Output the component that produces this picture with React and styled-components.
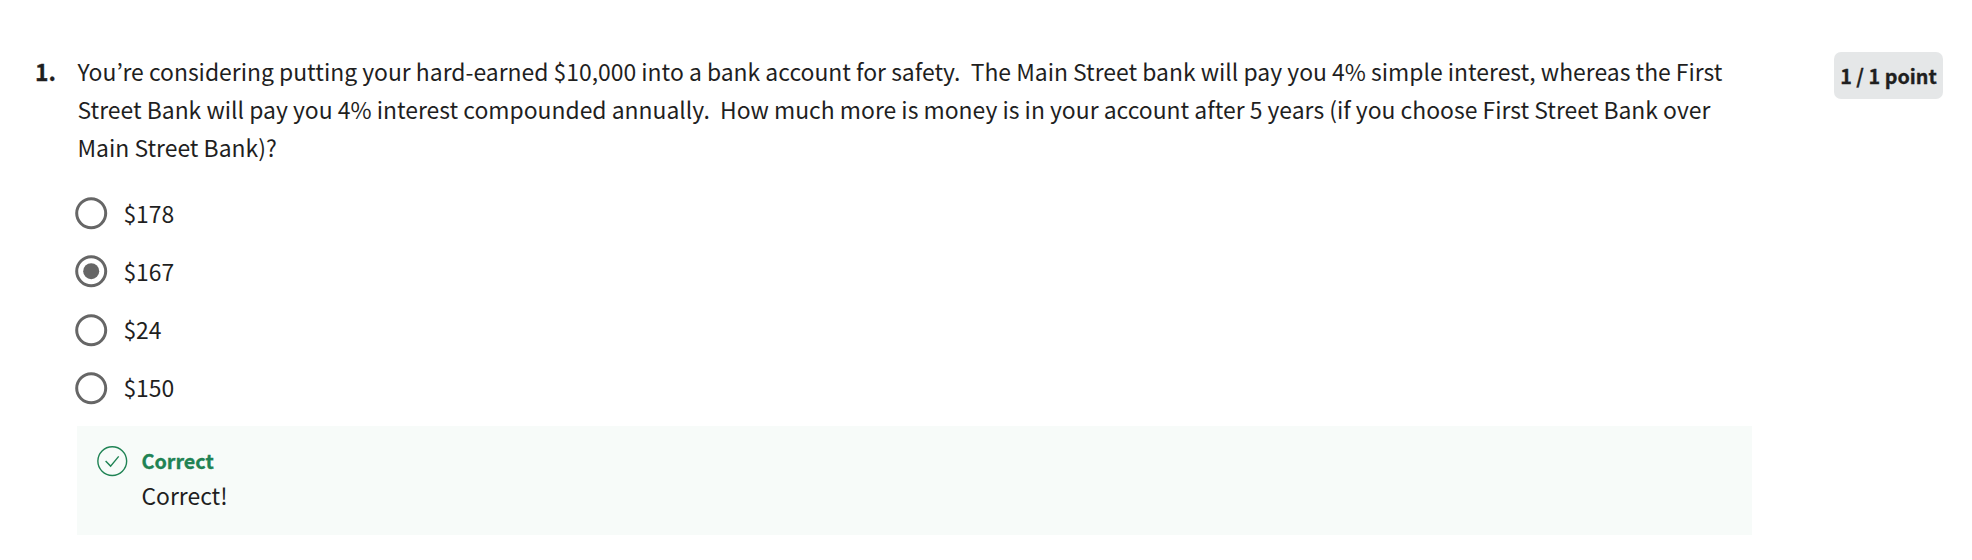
import React from "react";
import styled, { createGlobalStyle } from "styled-components";

const Global = createGlobalStyle`
  *, *::before, *::after { box-sizing: border-box; }
  body { margin: 0; background: #fff; color: #1f1f1f; font-family: "Noto Sans CJK KR", "Noto Sans", sans-serif; }
`;
const Page = styled.main`
  display: flex; align-items: flex-start; height: 560px; padding: 52px 29px 0 35px; overflow: hidden;
`;
const Number = styled.div`
  width: 42px; flex: none; font-size: 22.9px; line-height: 38px; font-weight: 700; -webkit-text-stroke: 0.3px;
`;
const Body = styled.div`
  width: 1675px; flex: none;
`;
const Prompt = styled.p`
  margin: 0; padding-left: 0.5px; font-size: 22.92px; line-height: 38px; white-space: pre;
`;
const Options = styled.div`
  display: flex; flex-direction: column; margin-top: 18px;
`;
const Option = styled.label`
  display: flex; align-items: center; height: 58.25px; gap: 16px; font-size: 22.9px; line-height: 38px; margin-left: -1.6px;
`;
const OptionText = styled.span`
  padding-bottom: 1px;
`;
const Radio = styled.svg`
  display: block; width: 32px; height: 32px; overflow: visible;
`;
const Feedback = styled.section`
  display: flex; height: 109px; margin-top: 9px; padding: 20px; gap: 14px; background: #f7fbf9;
`;
const Title = styled.div`
  color: #1f8354; font-weight: 700; font-size: 19.8px; line-height: 29px; -webkit-text-stroke: 0.3px;
`;
const Message = styled.div`
  font-size: 22.9px; line-height: 40px;
`;
const Points = styled.div`
  margin-left: auto; width: 109px; height: 47px; border-radius: 7px; background: #e5e7e8; text-align: center; font-size: 19.8px; font-weight: 700; line-height: 47px; white-space: nowrap; -webkit-text-stroke: 0.3px;
`;
const lines = [
  "You’re considering putting your hard-earned $10,000 into a bank account for safety.  The Main Street bank will pay you 4% simple interest, whereas the First",
  "Street Bank will pay you 4% interest compounded annually.  How much more is money is in your account after 5 years (if you choose First Street Bank over",
  "Main Street Bank)?",
];
export default function App() {
  return (
    <Page>
      <Global />
      <Number>1.</Number>
      <Body>
        <Prompt>{lines.join("\n")}</Prompt>
        <Options>
          {["$178", "$167", "$24", "$150"].map((o) => (
            <Option key={o}>
              <Radio viewBox="0 0 32 32">
                <circle cx="16.2" cy="16.2" r="14.5" fill="none" stroke="#666" strokeWidth="3" />
                {o === "$167" && <circle cx="16.2" cy="16.2" r="8" fill="#666" />}
              </Radio>
              <OptionText>{o}</OptionText>
            </Option>
          ))}
        </Options>
        <Feedback>
          <svg width="30.5" height="30.5" viewBox="0 0 30.5 30.5" fill="none" stroke="#1f8354" strokeWidth="1.4"><circle cx="15.25" cy="15.1" r="14.4" /><path d="M8.6 15l5 5.1 8.1-9.7" /></svg>
          <div><Title>Correct</Title><Message>Correct!</Message></div>
        </Feedback>
      </Body>
      <Points>1 / 1 point</Points>
    </Page>
  );
}
